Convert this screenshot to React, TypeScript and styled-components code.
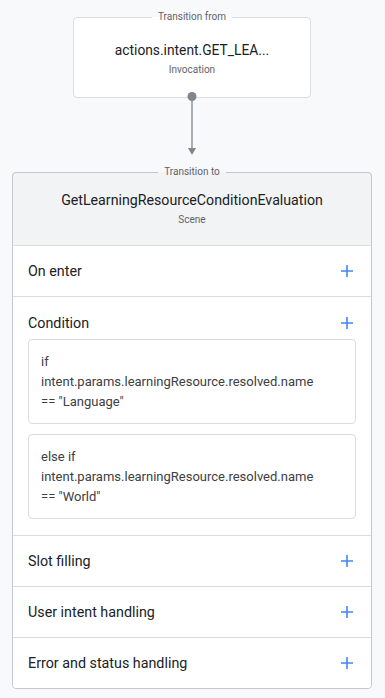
import styled, { createGlobalStyle } from "styled-components";

const GlobalStyle = createGlobalStyle`
  html, body {
    margin: 0;
    padding: 0;
    background: #f8f9fa;
    font-family: Roboto, "Liberation Sans", sans-serif;
    color: #202124;
  }
`;

const sections = ["On enter", "Condition", "Slot filling", "User intent handling", "Error and status handling"];

const conditions = [
  { keyword: "if", field: "intent.params.learningResource.resolved.name", value: '== "Language"' },
  { keyword: "else if", field: "intent.params.learningResource.resolved.name", value: '== "World"' },
];

const PlusIcon = () => (
  <svg width="12" height="12" viewBox="0 0 12 12">
    <path d="M6 0v12M0 6h12" stroke="#4285f4" strokeWidth="1.6" fill="none" />
  </svg>
);

const Connector = () => (
  <ConnectorSvg width="20" height="74" viewBox="0 0 20 74">
    <line x1="10" y1="4" x2="10" y2="58" stroke="#80868b" strokeWidth="1.3" />
    <circle cx="10" cy="4.5" r="4.5" fill="#80868b" />
    <polygon points="6,56 14,56 10,63" fill="#80868b" />
  </ConnectorSvg>
);

const App = () => {
  return (
    <>
      <GlobalStyle />
      <Page>
        <FromBox>
          <Legend>Transition from</Legend>
          <Title small>actions.intent.GET_LEA...</Title>
          <Subtitle>Invocation</Subtitle>
        </FromBox>
        <Connector />
        <SceneBox>
          <Legend>Transition to</Legend>
          <SceneHeader>
            <Title>GetLearningResourceConditionEvaluation</Title>
            <Subtitle>Scene</Subtitle>
          </SceneHeader>
          <SceneBody>
            {sections.map((name) =>
              name === "Condition" ? (
                <ConditionSection key={name}>
                  <Row compact>
                    <RowLabel>{name}</RowLabel>
                    <PlusIcon />
                  </Row>
                  {conditions.map((c) => (
                    <ConditionCard key={c.keyword}>
                      <div>{c.keyword}</div>
                      <div>{c.field}</div>
                      <div>{c.value}</div>
                    </ConditionCard>
                  ))}
                </ConditionSection>
              ) : (
                <Section key={name}>
                  <Row>
                    <RowLabel>{name}</RowLabel>
                    <PlusIcon />
                  </Row>
                </Section>
              )
            )}
          </SceneBody>
        </SceneBox>
      </Page>
    </>
  );
};

export default App;

const Page = styled.div`
  display: flex;
  flex-direction: column;
  align-items: center;
  padding: 11px 1px 11px 0;
`;

const Box = styled.fieldset`
  margin: 0;
  padding: 0;
  box-sizing: border-box;
  border-radius: 4px;
  text-align: center;
  min-width: 0;
`;

const FromBox = styled(Box)`
  width: 238px;
  background: #fff;
  border: 1px solid #dadce0;
  padding-bottom: 20px;
`;

const SceneBox = styled(Box)`
  width: 360px;
  background: #f1f3f4;
  border: 1px solid #c4c7cb;
`;

const Legend = styled.legend`
  margin: 0 auto;
  padding: 0 6px;
  font-size: 10px;
  line-height: 12px;
  color: #5f6368;
`;

const Title = styled.div<{ small?: boolean }>`
  font-size: ${(p) => (p.small ? "13.8px" : "14.2px")};
  line-height: 20px;
  color: #202124;
  white-space: nowrap;
  margin-top: ${(p) => (p.small ? "17px" : "12px")};
`;

const Subtitle = styled.div`
  font-size: 10px;
  line-height: 14px;
  color: #5f6368;
  margin-top: 3px;
`;

const SceneHeader = styled.div`
  padding-bottom: 18px;
  border-bottom: 1px solid #dadce0;
`;

const ConnectorSvg = styled.svg`
  display: block;
  margin-top: -6px;
`;

const SceneBody = styled.div`
  background: #fff;
  border-radius: 0 0 3px 3px;
  text-align: left;
`;

const Section = styled.div`
  border-bottom: 1px solid #dadce0;

  &:last-child {
    border-bottom: none;
  }
`;

const ConditionSection = styled(Section)`
  display: flex;
  flex-direction: column;
  gap: 10px;
  padding: 0 15px 16px;
`;

const Row = styled.div<{ compact?: boolean }>`
  display: flex;
  align-items: center;
  justify-content: space-between;
  height: ${(p) => (p.compact ? "36px" : "50px")};
  padding: ${(p) => (p.compact ? "16px 3px 0 0" : "0 18px 0 15px")};
  margin-bottom: ${(p) => (p.compact ? "-4px" : "0")};
  box-sizing: border-box;

  svg {
    display: block;
  }
`;

const RowLabel = styled.div`
  font-size: 14.3px;
  line-height: 20px;
  color: #202124;
`;

const ConditionCard = styled.div`
  border: 1px solid #dadce0;
  border-radius: 4px;
  padding: 12px 12px 11px;
  font-size: 13px;
  line-height: 20px;
  color: #3c4043;
`;
